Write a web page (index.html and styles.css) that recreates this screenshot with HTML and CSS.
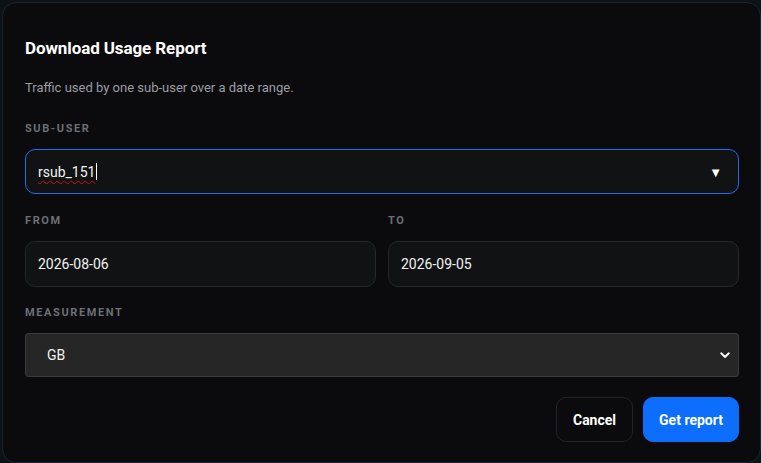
FILE: index.html
```html
<!DOCTYPE html>
<html lang="en">
<head>
<meta charset="utf-8">
<title>Download Usage Report</title>
<link rel="stylesheet" href="styles.css">
</head>
<body>
<div class="modal">
  <h2 class="title">Download Usage Report</h2>
  <p class="subtitle">Traffic used by one sub-user over a date range.</p>

  <div class="label label-first">SUB-USER</div>
  <div class="field field-focus">
    <span class="value"><span class="misspelled">rsub_151</span><span class="caret"></span></span>
    <span class="tri">&#9660;</span>
  </div>

  <div class="row">
    <div class="col">
      <div class="label">FROM</div>
      <div class="field">2026-08-06</div>
    </div>
    <div class="col">
      <div class="label">TO</div>
      <div class="field">2026-09-05</div>
    </div>
  </div>

  <div class="label label-measure">MEASUREMENT</div>
  <div class="select">
    <span>GB</span>
    <svg class="chev" width="10" height="7" viewBox="0 0 10 7"><path d="M1.2 1.3 L5 5 L8.8 1.3" fill="none" stroke="#ffffff" stroke-width="1.9" stroke-linecap="round" stroke-linejoin="round"/></svg>
  </div>

  <div class="actions">
    <button class="btn btn-cancel">Cancel</button>
    <button class="btn btn-primary">Get report</button>
  </div>
</div>
</body>
</html>
```

FILE: styles.css
```css
html, body {
  margin: 0;
  padding: 0;
  height: 100%;
  overflow: hidden;
}
body {
  background: #0d1219;
  font-family: Roboto, "Liberation Sans", Arial, sans-serif;
  color: #ffffff;
}
.modal {
  box-sizing: border-box;
  margin: 2px 0 0 2px;
  width: 759px;
  height: 461px;
  background: #0b0b0d;
  border: 1px solid #1c2230;
  border-radius: 14px;
  padding: 35px 21px 0 22px;
}
.title {
  margin: 0;
  font-size: 17px;
  line-height: 20px;
  font-weight: 700;
  color: #ffffff;
  letter-spacing: -0.1px;
}
.subtitle {
  margin: 21px 0 0;
  font-size: 13px;
  line-height: 18px;
  color: #9b9da3;
}
.label {
  font-size: 11px;
  line-height: 14px;
  font-weight: 700;
  letter-spacing: 1.6px;
  color: #6c6f76;
  margin: 18px 0 13px;
}
.label-first {
  margin-top: 25px;
}
.label-measure {
  margin-top: 19px;
}
.field {
  box-sizing: border-box;
  height: 46px;
  display: flex;
  align-items: center;
  padding: 0 12px;
  background: #111214;
  border: 1px solid #26272b;
  border-radius: 10px;
  font-size: 14px;
  color: #f2f2f2;
}
.field-focus {
  height: 45px;
  border-color: #1a6ef0;
  justify-content: space-between;
  padding-right: 16px;
}
.value {
  display: flex;
  align-items: center;
}
.misspelled {
  text-decoration: underline wavy #d01010;
  text-decoration-thickness: 1px;
  text-underline-offset: 3px;
}
.caret {
  display: inline-block;
  width: 1px;
  height: 17px;
  background: #ffffff;
  margin-left: 1px;
}
.tri {
  font-size: 13px;
  color: #ffffff;
  margin-top: 2px;
}
.row {
  display: flex;
  gap: 12px;
}
.col {
  flex: 1;
}
.row .label {
  margin-top: 20px;
}
.select {
  box-sizing: border-box;
  height: 44px;
  display: flex;
  align-items: center;
  justify-content: space-between;
  padding: 0 8px 0 21px;
  background: #262626;
  border: 1px solid #3b3b3b;
  border-radius: 3px;
  font-size: 14px;
  color: #f2f2f2;
}
.chev {
  display: block;
  margin-top: 1px;
}
.actions {
  display: flex;
  justify-content: flex-end;
  gap: 10px;
  margin-top: 20px;
}
.btn {
  box-sizing: border-box;
  height: 45px;
  border-radius: 10px;
  font-family: Roboto, "Liberation Sans", Arial, sans-serif;
  font-size: 14px;
  font-weight: 700;
  color: #ffffff;
  cursor: pointer;
}
.btn-cancel {
  width: 77px;
  background: #0b0b0d;
  border: 1px solid #232428;
}
.btn-primary {
  width: 96px;
  background: #0d6efd;
  border: 1px solid #0d6efd;
}
```
